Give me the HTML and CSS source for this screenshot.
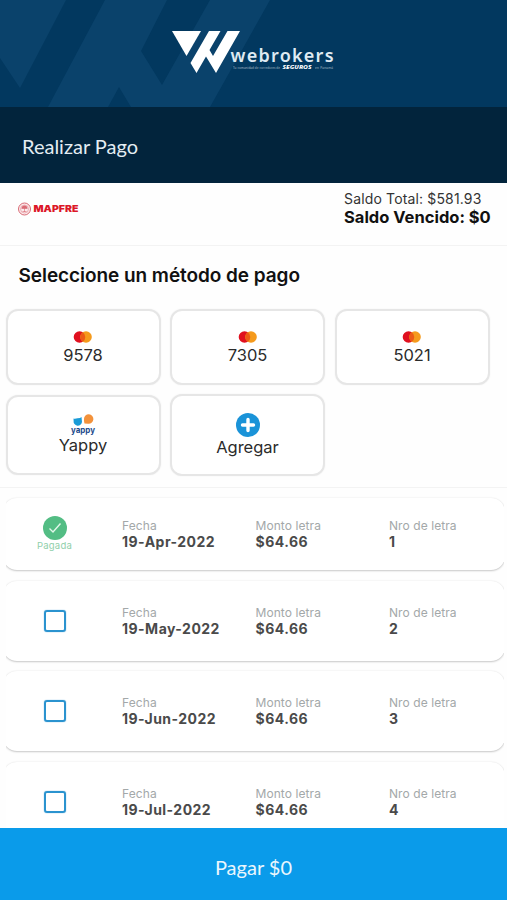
FILE: index.html
```html
<!DOCTYPE html>
<html lang="es">
<head>
    <meta charset="UTF-8">
    <meta name="viewport" content="width=device-width, initial-scale=1.0">
    <title>Realizar Pago</title>
    <link rel="stylesheet" href="styles.css">
</head>
<body>
    <header class="brand">
        <svg width="507" height="107" viewBox="0 0 507 107">
            <g fill="#0a426b">
                <path d="M0 0H66L20 88L0 58Z"/>
                <path d="M105 0H167L141 51L162 85L210 0H270L210 107H131L119 87L108 107H48Z"/>
            </g>
            <g fill="#fff">
                <path d="M172 31H201L186.500 56Z"/>
                <path d="M209 31H220.500L209.500 50L213 56L227.500 31H240L216 73L206 56.500L196.500 73L190.500 63Z"/>
                <text class="logo-name" x="230.500" y="62" textLength="103">webrokers</text>
                <text class="logo-tag" x="233" y="69" textLength="47">Tu comunidad de corredores de</text>
                <text class="logo-seguros" x="282.500" y="69.300" textLength="29" lengthAdjust="spacingAndGlyphs">SEGUROS</text>
                <text class="logo-tag" x="315" y="69" textLength="18">en Panamá</text>
            </g>
        </svg>
    </header>
    <h1 class="page-title">Realizar Pago</h1>

    <section class="summary">
        <svg width="62" height="16" viewBox="0 0 62 16">
            <circle cx="6.500" cy="8" r="6" fill="#fbeaec" stroke="#d96a74" stroke-width="1"/>
            <circle cx="6.500" cy="8" r="4" fill="none" stroke="#e59aa1" stroke-width=".7"/>
            <path d="M3.800 7.500a2.700 2.700 0 0 1 5.400 0ZM6.500 7V11M4.500 10.500H8.500" fill="#d96a74" stroke="#d96a74" stroke-width=".6"/>
            <text class="mapfre" x="15.500" y="11.200" textLength="45" lengthAdjust="spacingAndGlyphs">MAPFRE</text>
        </svg>
        <div class="balance">
            <p class="total">Saldo Total: $581.93</p>
            <p class="overdue">Saldo Vencido: $0</p>
        </div>
    </section>

    <section class="methods">
        <h2>Seleccione un método de pago</h2>
        <div class="method-grid">
            <button class="method">
                <svg width="20" height="12" viewBox="0 0 20 12"><circle cx="6.500" cy="6" r="5.800" fill="#e0101f"/><circle cx="13" cy="6" r="5.800" fill="#f59a1c"/><path d="M9.750 1.200a5.800 5.800 0 0 1 0 9.600a5.800 5.800 0 0 1 0-9.600Z" fill="#ec5a16"/></svg>
                <span>9578</span>
            </button>
            <button class="method">
                <svg width="20" height="12" viewBox="0 0 20 12"><circle cx="6.500" cy="6" r="5.800" fill="#e0101f"/><circle cx="13" cy="6" r="5.800" fill="#f59a1c"/><path d="M9.750 1.200a5.800 5.800 0 0 1 0 9.600a5.800 5.800 0 0 1 0-9.600Z" fill="#ec5a16"/></svg>
                <span>7305</span>
            </button>
            <button class="method">
                <svg width="20" height="12" viewBox="0 0 20 12"><circle cx="6.500" cy="6" r="5.800" fill="#e0101f"/><circle cx="13" cy="6" r="5.800" fill="#f59a1c"/><path d="M9.750 1.200a5.800 5.800 0 0 1 0 9.600a5.800 5.800 0 0 1 0-9.600Z" fill="#ec5a16"/></svg>
                <span>5021</span>
            </button>
            <button class="method method-yappy">
                <svg width="26" height="24" viewBox="0 0 26 24">
                    <path d="M3.500 4.500Q5 5 7.500 4.300Q10.500 4.200 11.500 3L12 8A4.200 4.200 0 1 1 3.600 7Z" fill="#1a9bd7"/>
                    <path d="M14 5A4.700 4.700 0 1 1 18 9.700L14.500 9.500Q13.700 7 14 5Z" fill="#f3923b"/>
                    <text class="yappy" x="1" y="19" textLength="24" lengthAdjust="spacingAndGlyphs">yappy</text>
                </svg>
                <span>Yappy</span>
            </button>
            <button class="method method-add">
                <svg width="24" height="24" viewBox="0 0 24 24"><circle cx="12" cy="12" r="12" fill="#1a93d8"/><path d="M12 6.500V17.500M6.500 12H17.500" stroke="#fff" stroke-width="3.400" stroke-linecap="round"/></svg>
                <span>Agregar</span>
            </button>
        </div>
    </section>

    <main class="installments">
        <div class="installment paid">
            <div class="status">
                <svg width="24" height="24" viewBox="0 0 24 24"><circle cx="12" cy="12" r="12" fill="#53bd84"/><path d="M6.500 12.500L10 16L17.500 7.500" fill="none" stroke="#e2f7ea" stroke-width="1.400"/></svg>
                <span>Pagada</span>
            </div>
            <div class="field"><label>Fecha</label><b>19-Apr-2022</b></div>
            <div class="field"><label>Monto letra</label><b>$64.66</b></div>
            <div class="field"><label>Nro de letra</label><b>1</b></div>
        </div>
        <div class="installment">
            <div class="status"><i class="checkbox"></i></div>
            <div class="field"><label>Fecha</label><b>19-May-2022</b></div>
            <div class="field"><label>Monto letra</label><b>$64.66</b></div>
            <div class="field"><label>Nro de letra</label><b>2</b></div>
        </div>
        <div class="installment">
            <div class="status"><i class="checkbox"></i></div>
            <div class="field"><label>Fecha</label><b>19-Jun-2022</b></div>
            <div class="field"><label>Monto letra</label><b>$64.66</b></div>
            <div class="field"><label>Nro de letra</label><b>3</b></div>
        </div>
        <div class="installment">
            <div class="status"><i class="checkbox"></i></div>
            <div class="field"><label>Fecha</label><b>19-Jul-2022</b></div>
            <div class="field"><label>Monto letra</label><b>$64.66</b></div>
            <div class="field"><label>Nro de letra</label><b>4</b></div>
        </div>
    </main>

    <button class="pay">Pagar $0</button>
</body>
</html>
```
FILE: styles.css
```css
* {
    box-sizing: border-box;
}
body {
    margin: 0;
    height: 900px;
    display: flex;
    flex-direction: column;
    overflow: hidden;
    background-color: #fefefe;
    font-family: Inter, sans-serif;
}
svg {
    display: block;
    flex: none;
}
h1, h2, p {
    margin: 0;
}
button {
    font-family: inherit;
}
.brand {
    flex: none;
    height: 107px;
    background-color: #02385f;
}
.logo-name {
    font: 600 18px "Noto Sans", sans-serif;
    fill: #dfeaf2;
}
.logo-tag {
    font: 3px "Noto Sans", sans-serif;
    opacity: 0.6;
}
.logo-seguros {
    font: italic 800 6px "Noto Sans", sans-serif;
}
.page-title {
    flex: none;
    display: flex;
    align-items: center;
    height: 76px;
    padding: 2px 22px 0;
    background-color: #02243c;
    color: #e4edf3;
    font: 400 20px Lato, sans-serif;
}
.summary {
    flex: none;
    display: flex;
    justify-content: space-between;
    height: 63px;
    padding: 7px 15px 0 18px;
    border-bottom: 1px solid #f3f3f3;
}
.summary svg {
    margin-top: 11px;
}
.mapfre {
    font: 900 9px Inter, sans-serif;
    fill: #dc1828;
}
.balance {
    width: 148px;
    white-space: nowrap;
}
.total {
    font-size: 14px;
    line-height: 18px;
    letter-spacing: 0.15px;
    color: #333;
}
.overdue {
    font-size: 16.5px;
    line-height: 19px;
    font-weight: 700;
    letter-spacing: 0;
    color: #111;
}
.methods {
    flex: none;
    height: 242px;
    padding: 18px 16px 0 5.5px;
    border-bottom: 1px solid #f3f3f3;
}
.methods h2 {
    padding-left: 13px;
    font-size: 19px;
    line-height: 24px;
    font-weight: 600;
    letter-spacing: -0.06px;
    color: #111;
}
.method-grid {
    display: grid;
    grid-template-columns: repeat(3, 155px);
    grid-template-rows: 76px 82px;
    gap: 9px 9.5px;
    align-items: center;
    margin-top: 21px;
}
.method {
    display: flex;
    flex-direction: column;
    align-items: center;
    height: 76px;
    padding: 20px 0 0;
    border: 2px solid #e6e6e6;
    border-radius: 12px;
    background-color: #fff;
    color: #2b2b2b;
    font-size: 16.5px;
    line-height: 25px;
    box-shadow: 0 0 2px rgba(0, 0, 0, 0.06);
}
.method-yappy {
    height: 80px;
    padding-top: 17px;
}
.method-yappy span {
    margin-top: -5px;
}
.method-add {
    height: 82px;
    padding-top: 17px;
}
.method-add span {
    margin-top: -2px;
}
.yappy {
    font: 700 8.5px Inter, sans-serif;
    fill: #234a8c;
}
.installments {
    flex: 1;
    min-height: 0;
    overflow: hidden;
    display: flex;
    flex-direction: column;
    gap: 10.5px;
    margin: 0 3px 0 6px;
    padding-top: 10px;
}
/* cards bleed past the list, which trims their side edges */
.installment {
    flex: none;
    display: grid;
    grid-template-columns: 103px 133.5px 133.5px 1fr;
    align-items: center;
    height: 80px;
    margin: 0 -1px 0 -3px;
    border-radius: 14px;
    background-color: #fff;
    box-shadow: 0 1px 2px rgba(0, 0, 0, 0.2), 0 0 2px rgba(0, 0, 0, 0.08);
}
.paid {
    height: 72px;
}
.status {
    display: flex;
    flex-direction: column;
    align-items: center;
}
.status span {
    font-size: 9.5px;
    line-height: 12px;
    letter-spacing: 0.2px;
    color: #8fcfaa;
}
.checkbox {
    width: 22px;
    height: 22px;
    border: 2.5px solid #2b93cf;
    border-radius: 3px;
    box-shadow: 0 0 1px #2b93cf;
}
.field {
    display: flex;
    flex-direction: column;
    padding-left: 16px;
}
.field label {
    font-size: 12px;
    line-height: 15px;
    letter-spacing: 0.08px;
    color: #a3a8a9;
}
.field b {
    font-size: 14px;
    line-height: 17px;
    font-weight: 700;
    letter-spacing: 0.48px;
    color: #4a4a4a;
}
.pay {
    flex: none;
    height: 72px;
    padding: 6px 0 0;
    border: none;
    background-color: #0a9bea;
    color: #eaf6fd;
    font: 20px Lato, sans-serif;
}
```
